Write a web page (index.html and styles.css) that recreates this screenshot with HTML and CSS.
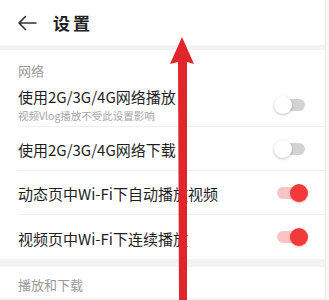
FILE: index.html
```html
<!DOCTYPE html>
<html lang="zh-CN">
<head>
    <meta charset="UTF-8">
    <meta name="viewport" content="width=device-width, initial-scale=1.0">
    <title>设置</title>
    <link rel="stylesheet" href="styles.css">
</head>
<body>
    <div class="page">
        <!-- 顶部标题栏 -->
        <div class="top-bar">
            <svg class="back-icon" width="20" height="16" viewBox="0 0 20 16">
                <path d="M19 8H2 M8.5 1.5L2 8l6.5 6.5" fill="none" stroke="#333" stroke-width="1.6" stroke-linecap="round" stroke-linejoin="round"/>
            </svg>
            <span class="top-title">设置</span>
        </div>

        <!-- 网络 -->
        <div class="group">
            <div class="group-label">网络</div>
            <div class="row row-tall">
                <div class="row-text">
                    <div class="row-title">使用2G/3G/4G网络播放</div>
                    <div class="row-sub">视频Vlog播放不受此设置影响</div>
                </div>
                <span class="toggle"><span class="track"></span><span class="knob"></span></span>
            </div>
            <div class="row">
                <div class="row-title">使用2G/3G/4G网络下载</div>
                <span class="toggle"><span class="track"></span><span class="knob"></span></span>
            </div>
            <div class="row">
                <div class="row-title">动态页中Wi-Fi下自动播放视频</div>
                <span class="toggle on"><span class="track"></span><span class="knob"></span></span>
            </div>
            <div class="row last">
                <div class="row-title">视频页中Wi-Fi下连续播放</div>
                <span class="toggle on"><span class="track"></span><span class="knob"></span></span>
            </div>
        </div>

        <!-- 播放和下载 -->
        <div class="group">
            <div class="group-label">播放和下载</div>
        </div>
    </div>

    <!-- 红色箭头标注 -->
    <svg class="mark-arrow" width="329" height="300" viewBox="0 0 329 300">
        <polygon points="182,37 194,64 187,62 187,300 179,300 178,62 170,64" fill="#e0252b"/>
    </svg>
</body>
</html>
```

FILE: styles.css
```css
/* 기본 */
body {
    margin: 0;
    padding: 0;
    font-family: "Noto Sans CJK SC", "Noto Sans", sans-serif;
    background-color: #f9f9f9;
    color: #222;
    overflow: hidden;
    position: relative;
}

.page {
    width: 325px;
    height: 300px;
    background-color: #f3f3f3;
    border-right: 1px solid #ececec;
    overflow: hidden;
}

/* 标题栏 */
.top-bar {
    height: 45px;
    background-color: white;
    display: flex;
    align-items: center;
    padding-left: 17px;
    margin-bottom: 5px;
}

.back-icon {
    display: block;
}

.top-title {
    margin-left: 16px;
    font-size: 17px;
    font-weight: bold;
    letter-spacing: 3px;
    color: #222;
}

/* 分组 */
.group {
    background-color: white;
    margin-bottom: 8px;
}

.group-label {
    padding: 12px 18px 4px;
    font-size: 13px;
    line-height: 18px;
    color: #9a9a9a;
}

.group:last-child .group-label {
    padding-top: 9px;
}

.row {
    display: flex;
    align-items: center;
    justify-content: space-between;
    height: 44px;
    margin-left: 18px;
    padding-right: 17px;
    border-bottom: 1px solid #f0f0f0;
    box-sizing: border-box;
}

.row.last {
    border-bottom: none;
}

.row-tall {
    height: 43px;
}

.row-title {
    font-size: 15px;
    line-height: 20px;
    padding-top: 3px;
    color: #1e1e1e;
}

.row-tall .row-title {
    padding-top: 0;
}

.row-sub {
    font-size: 10.5px;
    line-height: 17px;
    color: #a5a5a5;
}

/* 开关 */
.toggle {
    position: relative;
    width: 34px;
    height: 18px;
    flex-shrink: 0;
}

.toggle .track {
    position: absolute;
    left: 3px;
    right: 3px;
    top: 3px;
    height: 12px;
    border-radius: 6px;
    background-color: #d3d3d3;
}

.toggle .knob {
    position: absolute;
    left: 0;
    top: 0;
    width: 18px;
    height: 18px;
    border-radius: 50%;
    background-color: white;
    box-shadow: 0 1px 3px rgba(0, 0, 0, 0.25);
}

.toggle.on .track {
    background-color: #f9c4c4;
}

.toggle.on .knob {
    left: auto;
    right: 0;
    background-color: #f23a3a;
    box-shadow: 0 1px 2px rgba(200, 0, 0, 0.3);
}

/* 标注箭头 */
.mark-arrow {
    position: absolute;
    left: 0;
    top: 0;
}
```
